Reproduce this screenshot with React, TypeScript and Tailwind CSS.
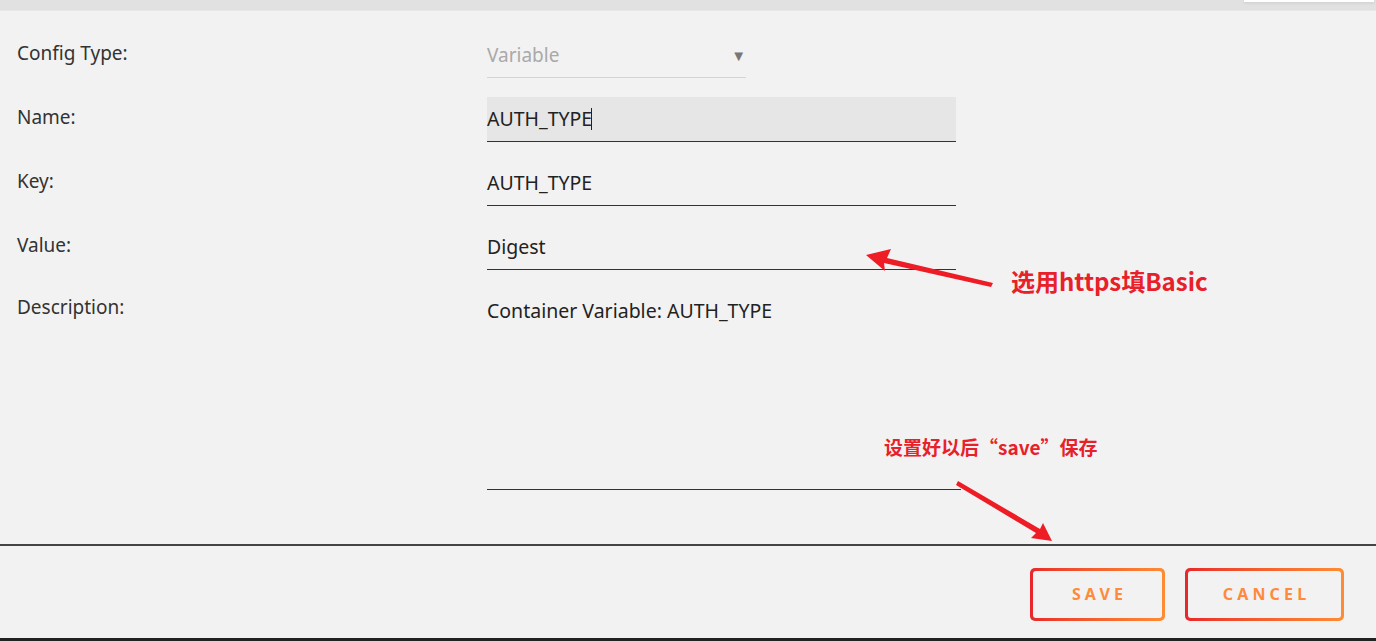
import React from "react";

const labelClass = "w-[470px] shrink-0 text-[19px] text-[#333]";
const fieldText = "text-[19.5px] text-[#222]";

function GradientButton({ label, width }: { label: string; width: string }) {
  return (
    <div className={`${width} h-[53px] rounded-[5px] bg-gradient-to-r from-[#e8262a] to-[#ff8c33] p-[3px]`}>
      <div className="flex h-full w-full items-center justify-center rounded-[3px] bg-[#f2f2f2] pl-[4px] text-[16px] font-bold tracking-[0.26em] text-[#ff8a3c]">
        {label}
      </div>
    </div>
  );
}

function Annotations() {
  return (
    <div className="pointer-events-none absolute inset-0">
      <svg width="1376" height="641" className="absolute left-0 top-0">
        <polygon
          points="866,255 891,249 887,258 993,283 991,287 884,263 885,271"
          fill="#ee1c25"
        />
        <polygon
          points="958,481 1040,529 1043,523 1052,541 1031,538 1036,533 956,485"
          fill="#ee1c25"
        />
      </svg>
      <div
        className="absolute left-[1011px] top-[264px] text-[24px] font-bold leading-[34px] text-[#e8202a]"
        style={{ fontFamily: '"Noto Sans CJK SC", "Noto Sans", sans-serif' }}
      >
        选用https填Basic
      </div>
      <div
        className="absolute left-[884px] top-[433px] text-[19px] font-bold leading-[28px] text-[#e8202a]"
        style={{ fontFamily: '"Noto Sans CJK SC", "Noto Sans", sans-serif' }}
      >
        设置好以后“save”保存
      </div>
    </div>
  );
}

export default function App() {
  return (
    <div
      className="relative flex h-[641px] w-[1376px] flex-col overflow-hidden bg-[#f2f2f2]"
      style={{ fontFamily: '"Noto Sans", "Open Sans", sans-serif' }}
    >
      <div className="relative h-[11px] shrink-0 border-b border-[#e8e8e8] bg-[#e1e1e1]">
        <div className="absolute right-[2px] top-0 h-[2px] w-[130px] bg-white shadow" />
      </div>

      <div className="flex flex-1 flex-col gap-[19px] pl-[17px] pt-[22px]">
        <div className="flex h-[45px] items-center">
          <div className={`${labelClass} mt-[-4px]`}>Config Type:</div>
          <div className="flex h-full w-[259px] items-center justify-between border-b border-[#d4d4d4]">
            <span className="text-[19px] text-[#a9a9a9]">Variable</span>
            <span className="text-[15px] text-[#777]">▼</span>
          </div>
        </div>

        <div className="flex h-[45px] items-center">
          <div className={`${labelClass} mt-[-4px]`}>Name:</div>
          <div className="flex h-full w-[469px] items-center border-b border-[#333] bg-[#e6e6e6]">
            <span className={fieldText}>AUTH_TYPE</span>
            <span className="ml-[-1px] h-[22px] w-px bg-[#222]" />
          </div>
        </div>

        <div className="flex h-[45px] items-center">
          <div className={`${labelClass} mt-[-4px]`}>Key:</div>
          <div className="flex h-full w-[469px] items-center border-b border-[#333]">
            <span className={fieldText}>AUTH_TYPE</span>
          </div>
        </div>

        <div className="flex h-[45px] items-center">
          <div className={`${labelClass} mt-[-4px]`}>Value:</div>
          <div className="flex h-full w-[469px] items-center border-b border-[#333]">
            <span className={fieldText}>Digest</span>
          </div>
        </div>

        <div className="flex">
          <div className={`${labelClass} pt-[4px]`}>Description:</div>
          <div className="h-[201px] w-[474px] border-b border-[#333] pt-[7px]">
            <span className={fieldText}>Container Variable: AUTH_TYPE</span>
          </div>
        </div>
      </div>

      <div className="h-[2px] shrink-0 bg-[#444]" />
      <div className="flex h-[92px] shrink-0 items-center justify-end gap-[20px] pr-[32px] pt-[4px]">
        <GradientButton label="SAVE" width="w-[135px]" />
        <GradientButton label="CANCEL" width="w-[159px]" />
      </div>
      <div className="h-[3px] shrink-0 bg-[#222]" />

      <Annotations />
    </div>
  );
}
